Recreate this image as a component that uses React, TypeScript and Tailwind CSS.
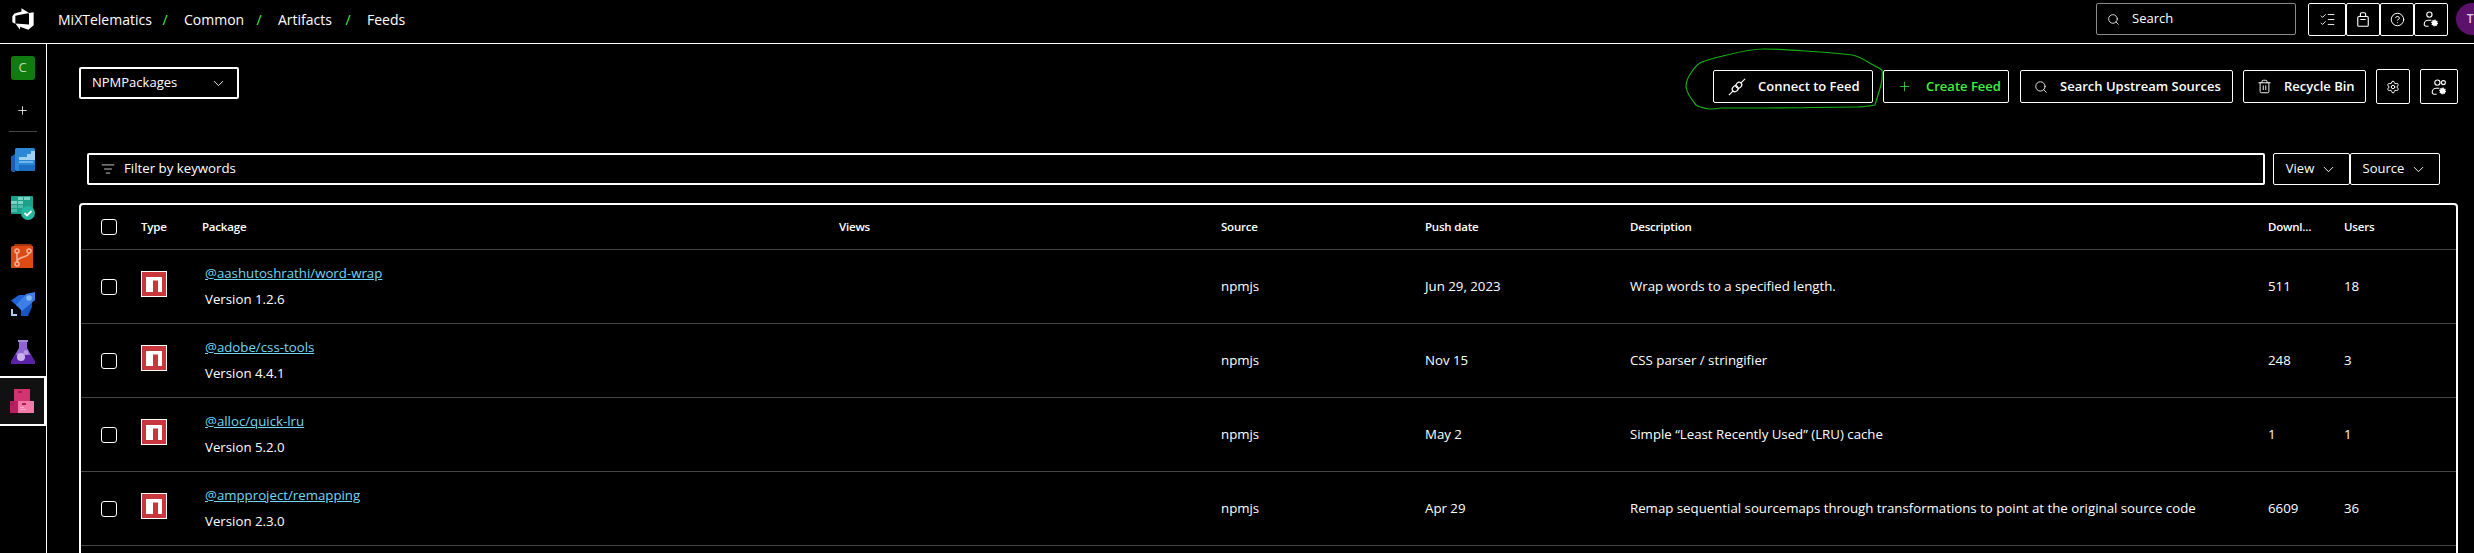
import { ChevronDown, CircleHelp, ListChecks, ListFilter, Plus, Search, Settings, Trash2 } from 'lucide-react';

const rows = [
    { name: '@aashutoshrathi/word-wrap', version: 'Version 1.2.6', date: 'Jun 29, 2023', description: 'Wrap words to a specified length.', downloads: '511', users: '18' },
    { name: '@adobe/css-tools', version: 'Version 4.4.1', date: 'Nov 15', description: 'CSS parser / stringifier', downloads: '248', users: '3' },
    { name: '@alloc/quick-lru', version: 'Version 5.2.0', date: 'May 2', description: 'Simple “Least Recently Used” (LRU) cache', downloads: '1', users: '1' },
    { name: '@ampproject/remapping', version: 'Version 2.3.0', date: 'Apr 29', description: 'Remap sequential sourcemaps through transformations to point at the original source code', downloads: '6609', users: '36' },
];

const gridCols = 'grid grid-cols-[40px_64px_634px_382px_204px_205px_638px_76px_1fr]';

function Logo() {
    return (
        <svg viewBox="0 0 18 18" className="w-[24px] h-[24px]" fill="white">
            <path d="M17 4v9.74l-4 3.28-6.2-2.26V17L3.29 12.41l10.23.8V4.44zm-3.41.49L7.85 1v2.29L2.58 4.84 1 6.87v4.61l2.26 1V6.57z" />
        </svg>
    );
}

function BoardsIcon() {
    return (
        <svg viewBox="0 0 24 24" className="w-6 h-6">
            <path d="M0 8.500 4 6v18H2a2 2 0 0 1-2-2z" fill="#1a5fb4" />
            <rect x="4" y="0" width="20" height="23" rx="1.500" fill="#2b88d8" />
            <path d="M8 17h16v4.500a1.500 1.500 0 0 1-1.500 1.500H8z" fill="#1b6ec2" />
            <path d="M8 9h8V6h4V3h4v9H8z" fill="#9fd0f5" />
            <path d="M8 13h14v2H8z" fill="#6fb4ea" />
        </svg>
    );
}

function TasksIcon() {
    return (
        <svg viewBox="0 0 24 24" className="w-6 h-6">
            <rect x="0" y="0" width="22" height="18" rx="1" fill="#1fa08a" />
            <path d="M0 5h6v3H0zM7 1h5v3H7zM13 1h6v3h-6zM7 5h5v3H7z" fill="#7bd4c3" />
            <path d="M0 9h6v3H0zM7 9h5v3H7zM0 13h6v3H0z" fill="#4cbca8" />
            <circle cx="17" cy="17" r="7" fill="#22b8a0" />
            <path d="m13.500 17 2.500 2.500 4.500-4.500" fill="none" stroke="white" strokeWidth="1.800" />
        </svg>
    );
}

function ReposIcon() {
    return (
        <svg viewBox="0 0 24 24" className="w-6 h-6">
            <path d="M4 0h16l2 3H2z" fill="#a8330c" />
            <path d="M2 2h20v22H0V4a2 2 0 0 1 2-2z" fill="#dd4a14" />
            <g fill="none" stroke="#f6b49c" strokeWidth="1.500">
                <circle cx="6" cy="7" r="2" />
                <circle cx="18" cy="7" r="2" />
                <circle cx="6" cy="20" r="2" />
                <path d="M6 9v9M18 9c0 5-12 3-12 9" />
            </g>
        </svg>
    );
}

function PipelinesIcon() {
    return (
        <svg viewBox="0 0 24 24" className="w-6 h-6">
            <path d="M0 8.500 8 3h6L6 14z" fill="#1f63d8" />
            <path d="M10 17 21 9v6l-4 9h-7z" fill="#1655c4" />
            <path d="M5 13 15 2l9-2v8L11 19z" fill="#3d7fe6" />
            <circle cx="18" cy="6" r="2.800" fill="#86b8f2" />
            <path d="M0 17h2v5h4v2H0z" fill="#a5cdf7" />
        </svg>
    );
}

function TestPlansIcon() {
    return (
        <svg viewBox="0 0 24 24" className="w-6 h-6">
            <path d="M7 0h10v2H7z" fill="#a58ad8" />
            <path d="M8 2h8v6l8 14a1.500 1.500 0 0 1-1.500 2h-21A1.500 1.500 0 0 1 0 22L8 8z" fill="#8f63d2" />
            <path d="M3.500 15h17L24 22a1.500 1.500 0 0 1-1.500 2h-21A1.500 1.500 0 0 1 0 22z" fill="#5b22a8" />
            <circle cx="10" cy="17" r="4" fill="#c9b3ec" />
            <circle cx="15" cy="12.500" r="2.500" fill="#b598e4" />
        </svg>
    );
}

function ArtifactsIcon() {
    return (
        <svg viewBox="0 0 24 24" className="w-6 h-6">
            <rect x="4" y="0" width="16" height="12" fill="#d3336f" />
            <path d="M8 2h4v2H8z" fill="#a51c55" />
            <rect x="0" y="12" width="8" height="12" fill="#b81f5f" />
            <rect x="8" y="12" width="16" height="12" fill="#f27aa8" />
            <path d="M12 14h4v2h-4zM4 14H1v2h3z" fill="#a51c55" />
            <path d="M10 18h4v1h-4zM10 20h6v1h-6z" fill="#f9a8c6" />
        </svg>
    );
}

function NpmIcon() {
    return (
        <svg viewBox="0 0 26 26" className="w-[26px] h-[26px] -mt-[5px]">
            <rect x="0.500" y="0.500" width="25" height="25" fill="#c9373e" stroke="white" />
            <path d="M5 6h16v15h-4V9.500h-5V21H5z" fill="white" />
        </svg>
    );
}

function PlugIcon() {
    return (
        <svg viewBox="0 0 20 20" className="w-[18px] h-[18px]" fill="none" stroke="white" strokeWidth="1.300">
            <path d="m1 19 4.500-4.500M14.500 5.500 19 1" />
            <ellipse cx="8" cy="12" rx="3.500" ry="3" transform="rotate(-45 8 12)" />
            <ellipse cx="12" cy="8" rx="3.500" ry="3" transform="rotate(-45 12 8)" />
        </svg>
    );
}

function BagIcon() {
    return (
        <svg viewBox="0 0 16 20" className="w-[12px] h-[15px]" fill="none" stroke="white" strokeWidth="1.500">
            <rect x="1" y="6" width="14" height="13" rx="1.500" />
            <path d="M4.500 6V2.500a1.500 1.500 0 0 1 1.500-1.500h4a1.500 1.500 0 0 1 1.500 1.500V6M4.500 10h7" />
        </svg>
    );
}

function UserGearIcon({ twoHeads }: { twoHeads?: boolean }) {
    return (
        <svg viewBox="0 0 20 20" className="w-[16px] h-[16px]" fill="none" stroke="white" strokeWidth="1.400">
            <circle cx="8" cy="4.500" r="3.300" />
            {twoHeads && <circle cx="15.500" cy="4.500" r="2.500" />}
            <path d="M7 19H4a2.500 2.500 0 0 1-2.500-2.500c0-3.500 3-5 5-5h4" />
            <circle cx="14.500" cy="15" r="3.300" fill="white" stroke="white" strokeDasharray="1.500 1" strokeWidth="2" />
        </svg>
    );
}

function ToolbarButton({ children, className }: { children: React.ReactNode; className: string }) {
    return (
        <button className={`h-[33px] flex items-center border border-white rounded-[2px] text-[13px] font-semibold text-white ${className}`}>
            {children}
        </button>
    );
}

export default function App() {
    return (
        <div className="relative h-[553px] overflow-hidden bg-black text-white font-['Open_Sans',sans-serif]">
            {/* Top bar */}
            <header className="h-[44px] flex items-center border-b border-white pl-[11px] pb-[5px]">
                <Logo />
                <nav className="ml-[23px] mt-px flex items-center text-[14px] leading-none">
                    <span className="w-[88px] whitespace-nowrap">MiXTelematics</span>
                    <span className="w-[38px] text-center text-[#3ff23f]">/</span>
                    <span className="w-[56px]">Common</span>
                    <span className="w-[38px] text-center text-[#3ff23f]">/</span>
                    <span className="w-[51px]">Artifacts</span>
                    <span className="w-[38px] text-center text-[#3ff23f]">/</span>
                    <span>Feeds</span>
                </nav>
                <div className="ml-auto flex items-center">
                    <div className="w-[200px] h-[32px] flex items-center border border-[#8a8a8a] rounded-[2px] pl-[10px] text-[13px]">
                        <Search className="w-[13px] h-[13px]" strokeWidth={1.500} />
                        <span className="ml-[12px]">Search</span>
                    </div>
                    <div className="ml-[12px] flex">
                        <div className="w-[38px] h-[33px] flex items-center justify-center border border-white rounded-[2px]">
                            <ListChecks className="w-[17px] h-[17px]" strokeWidth={1.300} />
                        </div>
                        <div className="w-[34px] h-[33px] flex items-center justify-center border border-white rounded-[2px]">
                            <BagIcon />
                        </div>
                        <div className="w-[34px] h-[33px] flex items-center justify-center border border-white rounded-[2px]">
                            <CircleHelp className="w-[15px] h-[15px]" strokeWidth={1.600} />
                        </div>
                        <div className="w-[34px] h-[33px] flex items-center justify-center border border-white rounded-[2px]">
                            <UserGearIcon />
                        </div>
                    </div>
                    <div className="ml-[8px] w-[18px] h-[32px] overflow-hidden">
                        <div className="w-[32px] h-[32px] rounded-full bg-[#5c126b] flex items-center justify-center text-[12px] font-semibold text-[#e0d0e4]">
                            TI
                        </div>
                    </div>
                </div>
            </header>

            <div className="flex">
                {/* Sidebar */}
                <aside className="w-[47px] h-[509px] shrink-0 border-r border-white flex flex-col">
                    <div className="h-[47px] flex items-center justify-center pr-px">
                        <div className="w-6 h-6 rounded-[3px] bg-[#107c10] flex items-center justify-center text-[13px] text-[#b8dcb8]">C</div>
                    </div>
                    <div className="h-[38px] flex items-center justify-center pr-px">
                        <Plus className="w-[13px] h-[13px]" strokeWidth={1.500} />
                    </div>
                    <div className="mt-[2px] mx-[9px] h-px bg-[#444]" />
                    <div className="mt-[4px] flex flex-col">
                        {[BoardsIcon, TasksIcon, ReposIcon, PipelinesIcon, TestPlansIcon].map((Icon, i) => (
                            <div key={i} className="h-[48px] flex items-center justify-center pr-px">
                                <Icon />
                            </div>
                        ))}
                        <div className="h-[50px] w-[46px] flex items-center justify-center border-y-2 border-r-2 border-white bg-[#111] pr-px">
                            <ArtifactsIcon />
                        </div>
                    </div>
                </aside>

                {/* Main content */}
                <main className="flex-1 min-w-0 pl-[32px] pr-[16px] pt-[23px]">
                    <div className="flex items-start justify-between">
                        <div className="w-[160px] h-[32px] flex items-center justify-between border-2 border-white rounded-[2px] pl-[11px] pr-[10px] text-[13px]">
                            <span>NPMPackages</span>
                            <ChevronDown className="w-[17px] h-[17px]" strokeWidth={1.300} />
                        </div>
                        <div className="flex items-center mt-[2px]">
                            <ToolbarButton className="w-[160px] pl-[14px]">
                                <PlugIcon />
                                <span className="ml-[12px]">Connect to Feed</span>
                            </ToolbarButton>
                            <ToolbarButton className="ml-[10px] w-[126px] pl-[13px]">
                                <Plus className="w-[15px] h-[15px] text-[#3ff23f]" strokeWidth={1.200} />
                                <span className="ml-[14px] text-[#3ff23f]">Create Feed</span>
                            </ToolbarButton>
                            <ToolbarButton className="ml-[11px] w-[213px] pl-[13px]">
                                <Search className="w-[14px] h-[14px]" strokeWidth={1.500} />
                                <span className="ml-[12px]">Search Upstream Sources</span>
                            </ToolbarButton>
                            <ToolbarButton className="ml-[10px] w-[123px] pl-[13px]">
                                <Trash2 className="w-[15px] h-[15px]" strokeWidth={1.500} />
                                <span className="ml-[12px]">Recycle Bin</span>
                            </ToolbarButton>
                            <ToolbarButton className="ml-[10px] w-[34px] !h-[35px] justify-center">
                                <Settings className="w-[14px] h-[14px]" strokeWidth={1.700} />
                            </ToolbarButton>
                            <ToolbarButton className="ml-[10px] w-[38px] !h-[35px] justify-center">
                                <UserGearIcon twoHeads />
                            </ToolbarButton>
                        </div>
                    </div>

                    <div className="mt-[49px] ml-[8px] mr-[18px] flex">
                        <div className="flex-1 h-[32px] flex items-center border-2 border-white rounded-[2px] pl-[12px] text-[13.250px]">
                            <ListFilter className="w-[14px] h-[14px]" strokeWidth={1.300} />
                            <span className="ml-[9px]">Filter by keywords</span>
                        </div>
                        <div className="ml-[8px] w-[77px] h-[32px] flex items-center justify-center gap-[6px] border border-white rounded-[2px] text-[13px]">
                            View <ChevronDown className="w-[17px] h-[17px]" strokeWidth={1.300} />
                        </div>
                        <div className="w-[90px] h-[32px] flex items-center justify-center gap-[6px] border border-white rounded-[2px] text-[13px]">
                            Source <ChevronDown className="w-[17px] h-[17px]" strokeWidth={1.300} />
                        </div>
                    </div>

                    {/* Package table */}
                    <div className="mt-[18px] h-[400px] border-2 border-white rounded-[4px] text-[13.250px]">
                        <div className={`${gridCols} h-[45px] items-center pl-[20px] border-b border-[#444] text-[11.500px] font-semibold tracking-[-0.2px]`}>
                            <div className="w-4 h-4 border border-white rounded-[3px]" />
                            <span>Type</span>
                            <span className="-ml-[3px]">Package</span>
                            <span>Views</span>
                            <span>Source</span>
                            <span>Push date</span>
                            <span>Description</span>
                            <span>Downl...</span>
                            <span>Users</span>
                        </div>
                        {rows.map((row) => (
                            <div key={row.name} className={`${gridCols} h-[74px] items-center pl-[20px] border-b border-[#444]`}>
                                <div className="w-4 h-4 border border-white rounded-[3px]" />
                                <NpmIcon />
                                <div className="flex flex-col gap-[9px] -mt-[1px]">
                                    <span className="text-[#75d6f2] underline leading-[17px]">{row.name}</span>
                                    <span className="leading-[17px]">{row.version}</span>
                                </div>
                                <span />
                                <span>npmjs</span>
                                <span>{row.date}</span>
                                <span>{row.description}</span>
                                <span>{row.downloads}</span>
                                <span>{row.users}</span>
                            </div>
                        ))}
                    </div>
                </main>
            </div>

            {/* Hand-drawn annotation over the screenshot */}
            <svg className="absolute inset-0 pointer-events-none" width="2474" height="553" fill="none">
                <path
                    d="M1721 108c-5 1-9 1-12 1-6-1-10-2-13-4-5-6-9-12-10-18 0-5 2-10 5-14 3-5 6-9 11-11 8-3 16-5 25-7 12-3 24-6 37-6 14 0 28 1 41 2 16 1 32 2 47 4 6 1 11 4 16 7 5 3 10 5 14 8 1 5 0 10-1 15l-6 20c-6 1-12 2-18 2-31 0-62 1-93 1-14 0-29 0-43 0"
                    stroke="#12b012"
                    strokeWidth="1.200"
                />
            </svg>
        </div>
    );
}
